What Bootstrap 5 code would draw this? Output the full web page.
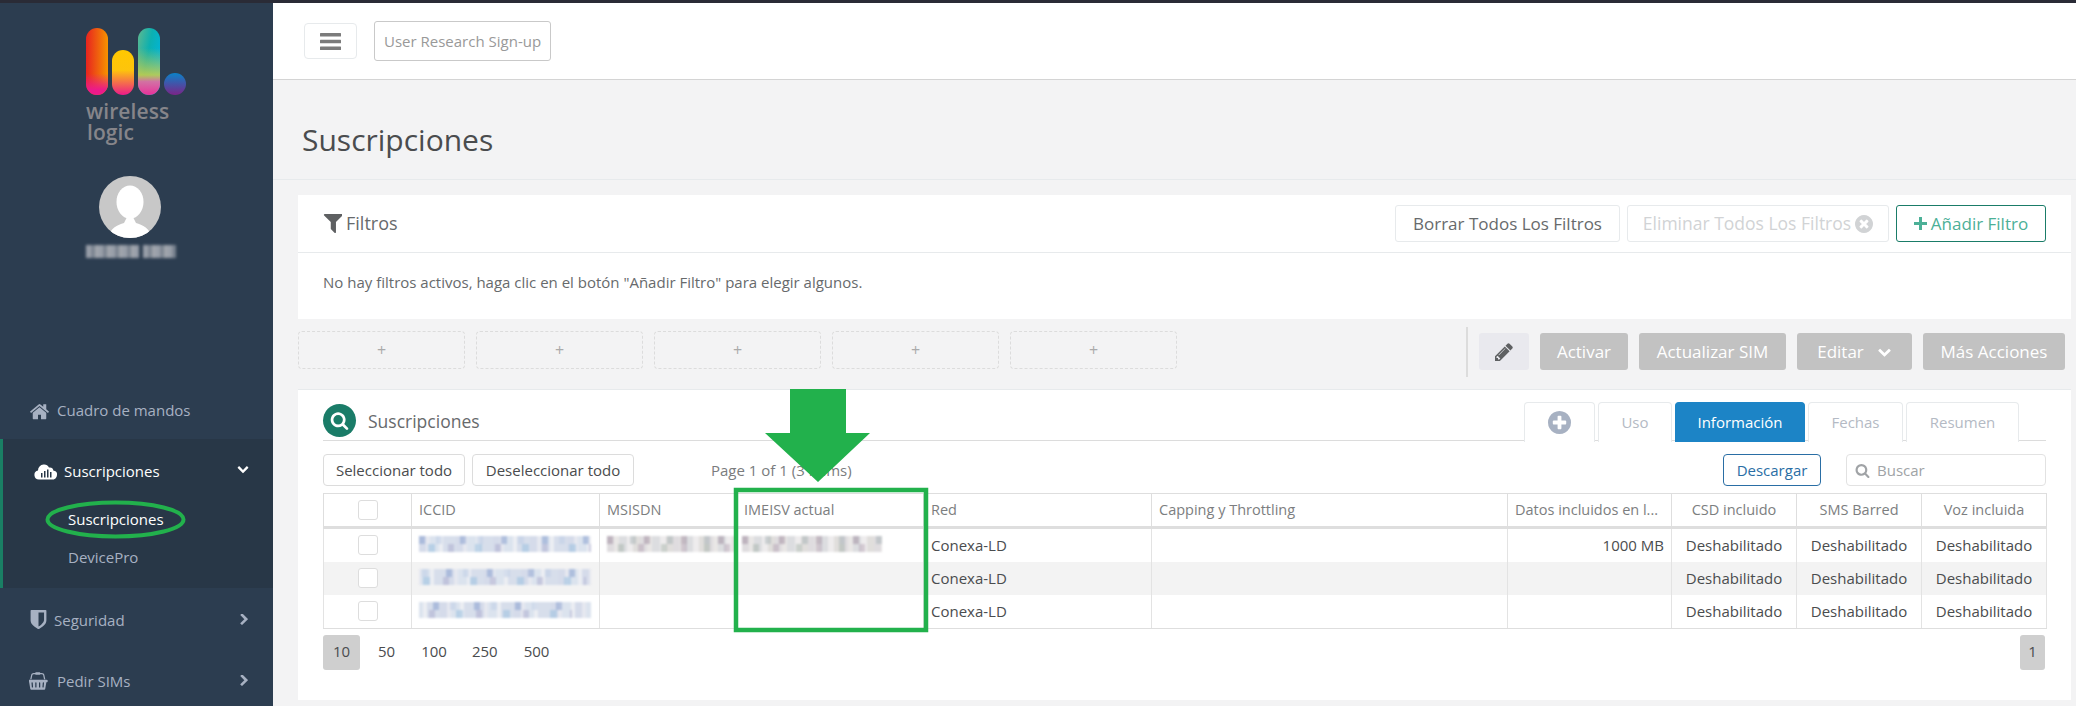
<!DOCTYPE html>
<html lang="es">
<head>
<meta charset="utf-8">
<title>Suscripciones</title>
<link href="https://cdn.jsdelivr.net/npm/bootstrap@5.3.0/dist/css/bootstrap.min.css" rel="stylesheet">
<style>
html,body{height:706px;overflow:hidden}
body{font-family:"Open Sans","Liberation Sans",sans-serif;font-size:15px;color:#676a6c;background:#f3f3f4;position:relative}
.topstrip{height:3px;background:#2a2b36}
.app{height:703px}
.side{width:273px;flex:none;background:#2c3d50;color:#a7b1c2;overflow:hidden}
.brand{height:125px;padding:25px 0 0 86px}
.brand-bars{display:block}
.brand-word{color:#86858a;font-weight:600;font-size:21px;line-height:21px;letter-spacing:.1px;display:block}
.bw-a{margin-top:6px}
.bw-b{padding-left:1px}
.who{padding-top:48px;height:253px}
.who svg{display:block;margin-left:99px}
.who-name{display:flex;gap:4px;margin:7px 0 0 86px;height:13px}
.who-name i{display:block;height:13px;background:repeating-linear-gradient(90deg,#9aa0aa 0 5px,#7b8490 5px 9px,#a2a6ad 9px 12px);filter:blur(1.5px)}
.wn-a{width:53px}.wn-b{width:33px}
.side-link{display:flex;align-items:center;color:#a7b1c2;text-decoration:none;position:relative;line-height:20px}
.side-link svg{fill:currentColor;flex:none}
.sl-home{height:58px;padding-left:29px;gap:7px}
.sl-open{background:#283747;border-left:3px solid #1a7f64;height:149px;padding-top:3px}
.sl-head{height:58px;padding-left:31px;gap:7px;color:#fff}
.sl-sub{padding:0 0 2px 65px;height:39px;color:#a7b1c2}
.sl-sub.on{color:#fff}
.sl-sub.last{padding-bottom:4px}
.sl-sec{height:61px;padding-left:30px;gap:7px;padding-top:2px}
.sl-ped{height:61px;padding-left:29px;gap:8px;padding-top:2px}
.chev{position:absolute;right:25px;top:50%;margin-top:-5px}
.sl-head .chev{right:24px;margin-top:-7px}
.main-col{min-width:0}
.topbar{height:77px;background:#fff;border-bottom:1px solid #d4d4d4;padding-left:31px;gap:17px}
.burger{width:53px;height:36px;border:1px solid #e7eaec;border-radius:4px;padding:0;display:flex;align-items:center;justify-content:center;background:#fff}
.research{height:40px;width:177px;border:1px solid #c9c9c9;border-radius:3px;color:#999;padding:0 9px;font-size:15px;display:flex;align-items:center;white-space:nowrap;text-decoration:none}
.pagehead{height:100px;border-bottom:1px solid #e7eaec;padding-left:29px;display:flex;align-items:center}
.pagehead h2{font-size:30px;font-weight:400;color:#4a4c4e;margin:0;padding-top:20px}
.content{padding:15px 5px 0 25px}
.filters{background:#fff;height:124px}
.filters-head{height:58px;border-bottom:1px solid #e7eaec;padding:10px 25px 0 25px}
.filters-title{font-size:18px;gap:4px;height:37px}
.filters-head-btns{gap:7px}
.filters-body{padding:18px 25px;line-height:22px}
.fbtn{height:37px;font-size:17px;color:#676a6c;border:1px solid #e7eaec;background:#fff;border-radius:3px;padding:0;white-space:nowrap;display:flex;align-items:center;justify-content:center}
.w-borrar{width:225px}
.w-elim{width:262px;color:#d1d3d5;gap:4px;font-size:17.500px}
.w-add{width:150px;border-color:#1a7c68;color:#4cb097;gap:4px}
.bar{height:70px}
.slots-wrap{gap:11px}
.slot{width:167px;height:38px;border:1px dashed #dcdcdc;border-radius:4px;color:#aaa;font-size:16px;margin-top:12px;display:flex;align-items:center;justify-content:center}
.tools{margin-left:auto;padding:8px 6px 0 0;gap:11px}
.tools-sep{width:2px;height:50px;background:#dcdcdc}
.tbtn{height:37px;margin-top:6px;background:#c2c2c2;color:#fff;border:0;border-radius:3px;font-size:17px;padding:0;display:flex;align-items:center;justify-content:center;gap:13px;white-space:nowrap}
.t-pen{width:50px;background:#e9e9ee}
.t-act{width:88px}.t-upd{width:147px}.t-edi{width:115px}.t-mas{width:142px}
.results{background:#fff;height:311px;padding:0 25px;border-top:1px solid #e7eaec}
.rhead{height:51px;border-bottom:1px solid #dcdcdc;position:relative}
.lens{width:33px;height:33px;border-radius:50%;background:#1a7c68;display:flex;align-items:center;justify-content:center;margin-top:14px}
.rtitle{font-size:17.500px;margin:15px 0 0 12px;line-height:33px}
.rtabs{margin-left:auto;margin-right:27px;gap:3px;margin-top:12px;border:0;height:40px;flex-wrap:nowrap}
.rtabs .nav-link{height:40px;border:1px solid #e7eaec;border-bottom:0;border-radius:4px 4px 0 0;color:#b4bac4;padding:0;display:flex;align-items:center;justify-content:center;margin:0;background:#fff;font-size:15px}
.rtabs .nav-link.active{background:#1c84c6;color:#fff;border-color:#1c84c6}
.tab-plus{width:71px}.tab-uso{width:74px}.tab-inf{width:130px}.tab-fec{width:95px}.tab-res{width:113px}
.rtools{margin-top:13px;height:32px;gap:7px}
.sbtn{height:32px;border:1px solid #dcdcdc;border-radius:4px;background:#fff;color:#4a4c4e;font-size:15px;padding:0;white-space:nowrap}
.w-sel{width:142px}.w-des{width:162px}
.pageinfo{margin-left:70px;color:#7a7c7e}
.dl{width:98px;height:32px;border:1px solid #2a6ea5;color:#2a6ea5;border-radius:4px;background:#fff;font-size:15px;padding:0;margin-left:auto}
.searchbox{width:200px;height:32px;border:1px solid #e2e2e2;border-radius:4px;margin-left:18px;padding-left:8px;gap:7px;color:#a0a3a6}
.datatable{table-layout:fixed;width:1723px;margin:7px 0 0;border-collapse:collapse;color:#4a4c4e;--bs-table-border-color:#dedede;--bs-table-color:#4a4c4e}
.datatable>thead>tr>th,.datatable>tbody>tr>td{padding:0 7px;border:1px solid #e3e3e3;font-weight:400;white-space:nowrap;overflow:hidden;vertical-align:middle;box-shadow:none;line-height:20px}
.datatable>thead>tr>th{height:34px;color:#7c7e80;border-color:#dedede;border-bottom:3px solid #dedede;font-size:14.500px}
.datatable>tbody>tr>td{height:33px;border-top:0;border-bottom:0}
.datatable>tbody>tr:first-child>td{height:34px}
.datatable>tbody>tr:last-child>td{border-bottom:1px solid #dedede;height:34px}
.datatable>tbody>tr.alt>td{background:#f3f3f3}
.box{display:block;width:20px;height:20px;border:1px solid #ddd;border-radius:3px;background:#fff;margin:0 auto}
.px{display:block;height:16px;margin-top:-3px;filter:blur(1.1px);
 background:
 repeating-linear-gradient(90deg,rgba(130,155,205,.5) 0 6px,transparent 6px 17px,rgba(190,205,230,.5) 17px 23px,transparent 23px 41px) 0 0/100% 50% no-repeat,
 repeating-linear-gradient(90deg,transparent 0 9px,rgba(160,195,225,.6) 9px 16px,transparent 16px 29px,rgba(170,170,205,.5) 29px 35px,transparent 35px 47px) 0 100%/100% 50% no-repeat,
 repeating-linear-gradient(90deg,#d5dbea 0 7px,#e6e8f0 7px 11px,#dbe3ee 11px 20px,#eceef3 20px 24px,#d7deeb 24px 37px);}
.px-b{background:
 repeating-linear-gradient(90deg,rgba(150,130,150,.45) 0 6px,transparent 6px 23px,rgba(150,165,170,.4) 23px 29px,transparent 29px 37px) 0 0/100% 50% no-repeat,
 repeating-linear-gradient(90deg,transparent 0 11px,rgba(160,175,165,.45) 11px 17px,transparent 17px 31px,rgba(170,150,170,.4) 31px 37px,transparent 37px 43px) 0 100%/100% 50% no-repeat,
 repeating-linear-gradient(90deg,#dfdcdf 0 7px,#e9e7e6 7px 12px,#dcdde0 12px 20px,#eeeced 20px 26px,#e0dedc 26px 33px);}
.row-b .px{background-position:-14px 0,-5px 100%,-9px 0}
.row-c .px{background-position:-27px 0,-19px 100%,-16px 0}
.p-1-w{width:172px}.p-2-w{width:128px}.p-3-w{width:140px;margin-left:-2px}
.pager{margin-top:6px;height:35px;color:#4a4c4e}
.pg{height:35px;display:flex;align-items:center;justify-content:center;border-radius:3px;padding-bottom:3px}
.pg.on{background:#cfcfcf}
.pg10{width:37px}
.pg50{margin-left:18px}.pg100{margin-left:26px}.pg250{margin-left:25px}.pg500{margin-left:26px}
.pg1{width:25px;margin-left:auto;margin-right:1px}
.notes{position:absolute;left:0;top:0;pointer-events:none}
</style>
</head>
<body>
<div class="topstrip"></div>
<div class="app d-flex">
  <aside class="side">
    <div class="brand">
      <svg class="brand-bars" width="100" height="67" viewBox="0 0 100 67" aria-hidden="true">
        <defs>
          <linearGradient id="g1" x1="0" y1="0" x2="1" y2="0"><stop offset="0" stop-color="#e8231f"/><stop offset="1" stop-color="#f59300"/></linearGradient>
          <linearGradient id="g2" x1="0" y1="0" x2="0" y2="1"><stop offset="0" stop-color="#ffc800"/><stop offset=".45" stop-color="#fdc40c"/><stop offset="1" stop-color="#ec1a8a"/></linearGradient>
          <linearGradient id="g3" x1="0" y1="0" x2="1" y2="0.6"><stop offset="0" stop-color="#5fb98f"/><stop offset=".5" stop-color="#0cb0b0"/><stop offset="1" stop-color="#00b4dc"/></linearGradient>
          <linearGradient id="g4" x1="0" y1="0" x2="0" y2="1"><stop offset="0" stop-color="#0b82c8"/><stop offset="1" stop-color="#7b2488"/></linearGradient>
          <linearGradient id="fadeP" x1="0" y1="0" x2="0" y2="1"><stop offset=".68" stop-color="#ec1a8a" stop-opacity="0"/><stop offset=".92" stop-color="#ec1a8a"/></linearGradient>
          <linearGradient id="fadeY" x1="0" y1="0" x2="0" y2="1"><stop offset=".3" stop-color="#d8d040" stop-opacity="0"/><stop offset=".7" stop-color="#d8d040" stop-opacity=".8"/><stop offset=".8" stop-color="#e86aa0" stop-opacity=".9"/><stop offset="1" stop-color="#e8309a"/></linearGradient>
        </defs>
        <rect x="0" y="0" width="22" height="67" rx="11" fill="url(#g1)"/>
        <rect x="0" y="0" width="22" height="67" rx="11" fill="url(#fadeP)"/>
        <rect x="26" y="22" width="22" height="45" rx="11" fill="url(#g2)"/>
        <rect x="52" y="0" width="22" height="67" rx="11" fill="url(#g3)"/>
        <rect x="52" y="0" width="22" height="67" rx="11" fill="url(#fadeY)"/>
        <circle cx="89" cy="56" r="11" fill="url(#g4)"/>
      </svg>
      <span class="brand-word bw-a">wireless</span>
      <span class="brand-word bw-b">logic</span>
    </div>
    <div class="who">
      <svg width="62" height="62" viewBox="0 0 62 62" aria-hidden="true">
        <defs><clipPath id="av"><circle cx="31" cy="31" r="31"/></clipPath></defs>
        <circle cx="31" cy="31" r="31" fill="#c8c8c8"/>
        <g clip-path="url(#av)" fill="#fff">
          <ellipse cx="31" cy="26" rx="13.500" ry="16.500"/>
          <path d="M10 62c0-10 9-13 15-15l3-6h6l3 6c6 2 15 5 15 15z"/>
        </g>
      </svg>
      <div class="who-name"><i class="wn-a"></i><i class="wn-b"></i></div>
    </div>
    <nav>
      <a class="side-link sl-home" href="#"><svg width="21" height="19" viewBox="0 0 1792 1600"><path d="M1472 992v480q0 26-19 45t-45 19h-384v-384h-256v384h-384q-26 0-45-19t-19-45v-480q0-1 .5-3t.5-3l575-474 575 474q1 2 1 6zm223-69l-62 74q-8 9-21 11h-3q-13 0-21-7l-692-577-692 577q-12 8-24 7-13-2-21-11l-62-74q-8-10-7-23.500t11-21.500l719-599q32-26 76-26t76 26l244 204v-195q0-14 9-23t23-9h192q14 0 23 9t9 23v408l219 182q10 8 11 21.500t-7 23.500z"/></svg>Cuadro de mandos</a>
      <div class="sl-open">
        <a class="side-link sl-head" href="#"><svg width="23" height="18" viewBox="0 0 23 18"><path d="M5 17.500a4.500 4.500 0 0 1-1-8.900 6 6 0 0 1 5.500-6.100 5.500 5.500 0 0 1 5.500 3 4 4 0 0 1 4.500 3.300 3.300 3.300 0 0 1 3.500 3.700c0 2.800-1.800 5-4 5z"/><path fill="#283747" d="M7 11h1.500v4.500H7zM10 9h1.500v6.500H10zM13 7.500h1.500v8H13zM16 10h1.500v5.500H16z"/></svg>Suscripciones<svg class="chev" width="12" height="10" viewBox="0 300 1792 1300"><path d="M1683 808l-742 741q-19 19-45 19t-45-19l-742-741q-19-19-19-45.500t19-45.500l166-165q19-19 45-19t45 19l531 531 531-531q19-19 45-19t45 19l166 165q19 19 19 45.500t-19 45.500z"/></svg></a>
        <a class="side-link sl-sub on" href="#">Suscripciones</a>
        <a class="side-link sl-sub last" href="#">DevicePro</a>
      </div>
      <a class="side-link sl-sec" href="#"><svg width="17" height="19" viewBox="256 128 1280 1536"><path d="M1344 960v-640h-448v1137q119-63 213-137 235-184 235-360zm192-768v768q0 86-33.500 170.500t-83 150-118 127.500-126.500 103-121 77.500-89.500 49.500-42.500 20q-12 6-26 6t-26-6q-16-7-42.500-20t-89.500-49.500-121-77.500-126.500-103-118-127.500-83-150-33.500-170.500v-768q0-26 19-45t45-19h1152q26 0 45 19t19 45z"/></svg>Seguridad<svg class="chev" width="8" height="12" viewBox="300 200 1100 1500"><path d="M1363 877l-742 742q-19 19-45 19t-45-19l-166-166q-19-19-19-45t19-45l531-531-531-531q-19-19-19-45t19-45l166-166q19-19 45-19t45 19l742 742q19 19 19 45t-19 45z"/></svg></a>
      <a class="side-link sl-ped" href="#"><svg width="20" height="18" viewBox="0 128 2048 1536"><path d="M1792 768q53 0 90.500 37.500t37.500 90.500-37.500 90.500-90.500 37.500h-15l-115 662q-8 46-44 76t-82 30h-1280q-46 0-82-30t-44-76l-115-662h-15q-53 0-90.500-37.500t-37.500-90.500 37.500-90.500 90.500-37.500h1792zm-1435 800q26-2 43.500-22.500t15.500-46.500l-32-416q-2-26-22.500-43.500t-46.500-15.500-43.500 22.500-15.500 46.500l32 416q2 25 20.500 42t43.500 17h5zm411-64v-416q0-26-19-45t-45-19-45 19-19 45v416q0 26 19 45t45 19 45-19 19-45zm384 0v-416q0-26-19-45t-45-19-45 19-19 45v416q0 26 19 45t45 19 45-19 19-45zm352 5l32-416q2-26-15.500-46.500t-43.500-22.500-46.500 15.500-22.500 43.500l-32 416q-2 26 15.500 46.500t43.500 22.500h5q25 0 43.500-17t20.500-42zm-1156-1217l-93 412h-132l101-441q19-88 89-143.500t160-55.500h167q0-26 19-45t45-19h384q26 0 45 19t19 45h167q90 0 160 55.500t89 143.500l101 441h-132l-93-412q-11-44-45.500-72t-79.500-28h-167q0 26-19 45t-45 19h-384q-26 0-45-19t-19-45h-167q-45 0-79.500 28t-45.500 72z"/></svg>Pedir SIMs<svg class="chev" width="8" height="12" viewBox="300 200 1100 1500"><path d="M1363 877l-742 742q-19 19-45 19t-45-19l-166-166q-19-19-19-45t19-45l531-531-531-531q-19-19-19-45t19-45l166-166q19-19 45-19t45 19l742 742q19 19 19 45t-19 45z"/></svg></a>
    </nav>
  </aside>

  <main class="main-col flex-grow-1">
    <div class="topbar d-flex align-items-center">
      <button class="burger" type="button" aria-label="Menú"><svg width="21" height="17" viewBox="0 0 21 17" fill="#7b7b7b"><rect width="21" height="3.500" rx=".5"/><rect y="6.700" width="21" height="3.500" rx=".5"/><rect y="13.500" width="21" height="3.500" rx=".5"/></svg></button>
      <a class="research" href="#">User Research Sign-up</a>
    </div>
    <div class="pagehead"><h2>Suscripciones</h2></div>
    <div class="content">
      <section class="filters">
        <div class="filters-head d-flex justify-content-between">
          <div class="filters-title d-flex align-items-center"><svg width="19" height="19" viewBox="64 256 1408 1408" fill="#5e6062"><path d="M1595 295q17 41-14 70l-493 493v742q0 42-39 59-13 5-25 5-27 0-45-19l-256-256q-19-19-19-45v-486l-493-493q-31-29-14-70 17-39 59-39h1280q42 0 59 39z" transform="translate(-64 0)"/></svg>Filtros</div>
          <div class="d-flex filters-head-btns">
            <button class="fbtn w-borrar" type="button">Borrar Todos Los Filtros</button>
            <button class="fbtn w-elim" type="button">Eliminar Todos Los Filtros<svg width="18" height="18" viewBox="128 128 1536 1536" fill="#d1d3d5"><path d="M1277 1122q0-26-19-45l-181-181 181-181q19-19 19-45 0-27-19-46l-90-90q-19-19-46-19-26 0-45 19l-181 181-181-181q-19-19-45-19-27 0-46 19l-90 90q-19 19-19 46 0 26 19 45l181 181-181 181q-19 19-19 45 0 27 19 46l90 90q19 19 46 19 26 0 45-19l181-181 181 181q19 19 45 19 27 0 46-19l90-90q19-19 19-46zm387-226q0 209-103 385.500t-279.500 279.500-385.500 103-385.500-103-279.500-279.500-103-385.500 103-385.500 279.500-279.500 385.500-103 385.500 103 279.500 279.500 103 385.500z"/></svg></button>
            <button class="fbtn w-add" type="button"><svg width="13" height="13" viewBox="0 0 13 13" fill="#4cb097"><path d="M5 0h3v5h5v3H8v5H5V8H0V5h5z"/></svg>Añadir Filtro</button>
          </div>
        </div>
        <div class="filters-body">No hay filtros activos, haga clic en el botón "Añadir Filtro" para elegir algunos.</div>
      </section>

      <div class="bar d-flex">
        <div class="d-flex slots-wrap">
          <div class="slot">+</div><div class="slot">+</div><div class="slot">+</div><div class="slot">+</div><div class="slot">+</div>
        </div>
        <div class="tools d-flex">
          <div class="tools-sep"></div>
          <button class="tbtn t-pen" type="button" aria-label="Editar"><svg width="18" height="18" viewBox="128 128 1536 1536" fill="#5e6062"><path d="M491 1536l91-91-235-235-91 91v107h128v128h107zm523-928q0-22-22-22-10 0-17 7l-542 542q-7 7-7 17 0 22 22 22 10 0 17-7l542-542q7-7 7-17zm-54-192l416 416-832 832h-416v-416zm683 96q0 53-37 90l-166 166-416-416 166-165q36-38 90-38 53 0 91 38l235 234q37 39 37 91z"/></svg></button>
          <button class="tbtn t-act" type="button">Activar</button>
          <button class="tbtn t-upd" type="button">Actualizar SIM</button>
          <button class="tbtn t-edi" type="button">Editar<svg width="15" height="10" viewBox="0 300 1792 1300" fill="#fff"><path d="M1683 808l-742 741q-19 19-45 19t-45-19l-742-741q-19-19-19-45.500t19-45.500l166-165q19-19 45-19t45 19l531 531 531-531q19-19 45-19t45 19l166 165q19 19 19 45.500t-19 45.500z"/></svg></button>
          <button class="tbtn t-mas" type="button">Más Acciones</button>
        </div>
      </div>

      <section class="results">
        <div class="rhead d-flex">
          <div class="lens"><svg width="19" height="19" viewBox="0 0 1792 1792" fill="#fff"><path d="M1216 832q0-185-131.500-316.500t-316.500-131.500-316.500 131.500-131.500 316.500 131.500 316.500 316.500 131.500 316.500-131.500 131.500-316.500zm512 832q0 52-38 90t-90 38q-54 0-90-38l-343-342q-179 124-399 124-143 0-273.500-55.500t-225-150-150-225-55.500-273.500 55.500-273.500 150-225 225-150 273.500-55.500 273.500 55.500 225 150 150 225 55.500 273.500q0 220-124 399l343 343q37 37 37 90z"/></svg></div>
          <div class="rtitle">Suscripciones</div>
          <ul class="nav nav-tabs rtabs">
            <li class="nav-item"><a class="nav-link tab-plus" href="#" aria-label="Añadir"><svg width="23" height="23" viewBox="128 128 1536 1536" fill="#a7b1c2"><path d="M1344 960v-128q0-26-19-45t-45-19h-256v-256q0-26-19-45t-45-19h-128q-26 0-45 19t-19 45v256h-256q-26 0-45 19t-19 45v128q0 26 19 45t45 19h256v256q0 26 19 45t45 19h128q26 0 45-19t19-45v-256h256q26 0 45-19t19-45zm320-64q0 209-103 385.500t-279.500 279.500-385.500 103-385.500-103-279.500-279.500-103-385.500 103-385.500 279.500-279.500 385.500-103 385.500 103 279.500 279.500 103 385.500z"/></svg></a></li>
            <li class="nav-item"><a class="nav-link tab-uso" href="#">Uso</a></li>
            <li class="nav-item"><a class="nav-link tab-inf active" href="#">Información</a></li>
            <li class="nav-item"><a class="nav-link tab-fec" href="#">Fechas</a></li>
            <li class="nav-item"><a class="nav-link tab-res" href="#">Resumen</a></li>
          </ul>
        </div>

        <div class="rtools d-flex align-items-center">
          <button class="sbtn w-sel" type="button">Seleccionar todo</button>
          <button class="sbtn w-des" type="button">Deseleccionar todo</button>
          <span class="pageinfo">Page 1 of 1 (3 items)</span>
          <button class="dl" type="button">Descargar</button>
          <div class="searchbox d-flex align-items-center"><svg width="15" height="15" viewBox="0 0 1792 1792" fill="#a0a3a6"><path d="M1216 832q0-185-131.500-316.500t-316.500-131.500-316.500 131.500-131.500 316.500 131.500 316.500 316.500 131.500 316.500-131.500 131.500-316.500zm512 832q0 52-38 90t-90 38q-54 0-90-38l-343-342q-179 124-399 124-143 0-273.500-55.500t-225-150-150-225-55.500-273.500 55.500-273.500 150-225 225-150 273.500-55.500 273.500 55.500 225 150 150 225 55.500 273.500q0 220-124 399l343 343q37 37 37 90z"/></svg>Buscar</div>
        </div>

        <table class="table datatable">
          <colgroup><col style="width:88px"><col style="width:188px"><col style="width:137px"><col style="width:187px"><col style="width:228px"><col style="width:356px"><col style="width:164px"><col style="width:125px"><col style="width:125px"><col style="width:125px"></colgroup>
          <thead><tr>
            <th><span class="box"></span></th><th>ICCID</th><th>MSISDN</th><th>IMEISV actual</th><th>Red</th><th>Capping y Throttling</th><th>Datos incluidos en l...</th><th class="text-center">CSD incluido</th><th class="text-center">SMS Barred</th><th class="text-center">Voz incluida</th>
          </tr></thead>
          <tbody>
            <tr><td><span class="box"></span></td><td><span class="px p-1-w"></span></td><td><span class="px px-b p-2-w"></span></td><td><span class="px px-b p-3-w"></span></td><td>Conexa-LD</td><td></td><td class="text-end">1000 MB</td><td class="text-center">Deshabilitado</td><td class="text-center">Deshabilitado</td><td class="text-center">Deshabilitado</td></tr>
            <tr class="alt row-b"><td><span class="box"></span></td><td><span class="px p-1-w"></span></td><td></td><td></td><td>Conexa-LD</td><td></td><td></td><td class="text-center">Deshabilitado</td><td class="text-center">Deshabilitado</td><td class="text-center">Deshabilitado</td></tr>
            <tr class="row-c"><td><span class="box"></span></td><td><span class="px p-1-w"></span></td><td></td><td></td><td>Conexa-LD</td><td></td><td></td><td class="text-center">Deshabilitado</td><td class="text-center">Deshabilitado</td><td class="text-center">Deshabilitado</td></tr>
          </tbody>
        </table>

        <div class="pager d-flex">
          <span class="pg pg10 on">10</span><span class="pg pg50">50</span><span class="pg pg100">100</span><span class="pg pg250">250</span><span class="pg pg500">500</span><span class="pg pg1 on">1</span>
        </div>
      </section>
    </div>
  </main>
</div>

<svg class="notes" width="2076" height="706" viewBox="0 0 2076 706" aria-hidden="true">
  <ellipse cx="115.500" cy="519.500" rx="68" ry="17" fill="none" stroke="#22b14c" stroke-width="4"/>
  <rect x="736" y="490" width="190" height="140" fill="none" stroke="#22b14c" stroke-width="4.500"/>
  <path d="M790 389h56v44h24l-52 49-53-49h25z" fill="#22b14c"/>
</svg>
<script src="https://cdn.jsdelivr.net/npm/bootstrap@5.3.0/dist/js/bootstrap.bundle.min.js"></script>
</body>
</html>
